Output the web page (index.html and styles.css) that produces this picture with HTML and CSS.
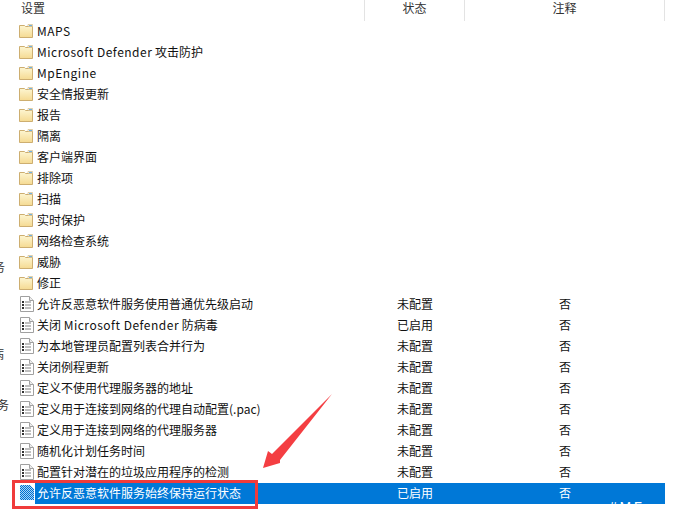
FILE: index.html
```html
<!DOCTYPE html>
<html lang="zh">
<head>
<meta charset="utf-8">
<title>设置</title>
<link rel="stylesheet" href="styles.css">
</head>
<body>
<svg class="defs" width="0" height="0">
  <defs>
    <linearGradient id="fg" x1="0" y1="0" x2="0" y2="1"><stop offset="0" stop-color="#fdf6d2"/><stop offset="1" stop-color="#f5da92"/></linearGradient>
    <pattern id="chk" width="2" height="2" patternUnits="userSpaceOnUse"><rect width="2" height="2" fill="#0070d0"/><rect width="1" height="1" fill="#a9d5f6"/><rect x="1" y="1" width="1" height="1" fill="#a9d5f6"/></pattern>
    <symbol id="folder" viewBox="0 0 16 16">
      <path d="M1.5 14.5V2.5h5l1 1h7v11z" fill="url(#fg)" stroke="#cdae70"/>
      <path d="M10 1.5h4.5v2H10z" fill="#fff" stroke="#cdae70" stroke-width=".6"/>
      <path d="M11 2h3v1h-3z" fill="#6db2e4"/>
    </symbol>
    <symbol id="doc" viewBox="0 0 16 16">
      <path d="M2.5 .5h9l4 4v11h-13z" fill="#fff" stroke="#a0a0a0"/>
      <path d="M11.5 .5v4h4" fill="#ececec" stroke="#a0a0a0"/>
      <path d="M4 5h2v2H4zM4 8h2v2H4zM4 11h2v2H4z" fill="#333"/>
      <path d="M7 6h6M7 9h6M7 12h6" stroke="#808080"/>
    </symbol>
    <symbol id="docsel" viewBox="0 0 16 16">
      <path d="M2 0h10l4 4v11H2z" fill="url(#chk)"/>
    </symbol>
  </defs>
</svg>
<main class="page">
  <div class="header">
    <div class="hcell h-set">设置</div>
    <div class="hcell h-state">状态</div>
    <div class="hcell h-note">注释</div>
  </div>
  <ul class="list">
    <li class="row"><svg class="ic"><use href="#folder"/></svg><span class="name"><span class="lat">MAPS</span></span></li>
    <li class="row"><svg class="ic"><use href="#folder"/></svg><span class="name"><span class="lat">Microsoft Defender</span> 攻击防护</span></li>
    <li class="row"><svg class="ic"><use href="#folder"/></svg><span class="name"><span class="lat">MpEngine</span></span></li>
    <li class="row"><svg class="ic"><use href="#folder"/></svg><span class="name">安全情报更新</span></li>
    <li class="row"><svg class="ic"><use href="#folder"/></svg><span class="name">报告</span></li>
    <li class="row"><svg class="ic"><use href="#folder"/></svg><span class="name">隔离</span></li>
    <li class="row"><svg class="ic"><use href="#folder"/></svg><span class="name">客户端界面</span></li>
    <li class="row"><svg class="ic"><use href="#folder"/></svg><span class="name">排除项</span></li>
    <li class="row"><svg class="ic"><use href="#folder"/></svg><span class="name">扫描</span></li>
    <li class="row"><svg class="ic"><use href="#folder"/></svg><span class="name">实时保护</span></li>
    <li class="row"><svg class="ic"><use href="#folder"/></svg><span class="name">网络检查系统</span></li>
    <li class="row"><svg class="ic"><use href="#folder"/></svg><span class="name">威胁</span></li>
    <li class="row"><svg class="ic"><use href="#folder"/></svg><span class="name">修正</span></li>
    <li class="row"><svg class="ic"><use href="#doc"/></svg><span class="name">允许反恶意软件服务使用普通优先级启动</span><span class="state">未配置</span><span class="note">否</span></li>
    <li class="row"><svg class="ic"><use href="#doc"/></svg><span class="name">关闭 <span class="lat">Microsoft Defender</span> 防病毒</span><span class="state">已启用</span><span class="note">否</span></li>
    <li class="row"><svg class="ic"><use href="#doc"/></svg><span class="name">为本地管理员配置列表合并行为</span><span class="state">未配置</span><span class="note">否</span></li>
    <li class="row"><svg class="ic"><use href="#doc"/></svg><span class="name">关闭例程更新</span><span class="state">未配置</span><span class="note">否</span></li>
    <li class="row"><svg class="ic"><use href="#doc"/></svg><span class="name">定义不使用代理服务器的地址</span><span class="state">未配置</span><span class="note">否</span></li>
    <li class="row"><svg class="ic"><use href="#doc"/></svg><span class="name">定义用于连接到网络的代理自动配置(.pac)</span><span class="state">未配置</span><span class="note">否</span></li>
    <li class="row"><svg class="ic"><use href="#doc"/></svg><span class="name">定义用于连接到网络的代理服务器</span><span class="state">未配置</span><span class="note">否</span></li>
    <li class="row"><svg class="ic"><use href="#doc"/></svg><span class="name">随机化计划任务时间</span><span class="state">未配置</span><span class="note">否</span></li>
    <li class="row"><svg class="ic"><use href="#doc"/></svg><span class="name">配置针对潜在的垃圾应用程序的检测</span><span class="state">未配置</span><span class="note">否</span></li>
    <li class="row selected"><svg class="ic"><use href="#docsel"/></svg><span class="name">允许反恶意软件服务始终保持运行状态</span><span class="state">已启用</span><span class="note">否</span></li>
  </ul>
  <div class="redbox"></div>
  <svg class="arrow" width="80" height="90" viewBox="256 390 80 90"><path d="M332 394L280 460L280 463L263 468L268 451L272 454z" fill="#f43e42"/></svg>
  <span class="edge e1">务</span><span class="edge e2">病</span><span class="edge e3">务</span>
  <span class="mark">#ME</span>
</main>
</body>
</html>
```
FILE: styles.css
```css
html, body { margin: 0; padding: 0; background: #fff; }
.defs { position: absolute; }
.page {
  position: relative;
  width: 676px;
  height: 526px;
  overflow: hidden;
  font-family: "Noto Sans CJK SC", "Noto Sans", sans-serif;
  font-size: 12px;
  color: #111;
}
.header { display: flex; height: 21px; }
.hcell { line-height: 16px; color: #333; border-right: 1px solid #e3e3e3; box-sizing: border-box; }
.h-set { width: 365px; padding-left: 21px; }
.h-state { width: 100px; text-align: center; }
.h-note { width: 200px; text-align: center; }
.list { list-style: none; margin: 0; padding: 0 0 0 18px; width: 647px; }
.row { display: flex; align-items: center; height: 21px; padding-bottom: 2px; box-sizing: border-box; white-space: nowrap; }
.ic { width: 16px; height: 16px; margin-top: 1px; flex: none; }
.name { width: 360px; padding-left: 3px; flex: none; }
.lat { letter-spacing: .5px; }
.state { width: 162px; flex: none; }
.note { flex: none; }
.selected { background: linear-gradient(to right, #fff 17px, #0078d7 17px); color: #fff; }
.redbox {
  position: absolute;
  left: 12px;
  top: 480px;
  width: 246px;
  height: 29px;
  box-sizing: border-box;
  border: 3px solid #f03b3b;
}
.arrow { position: absolute; left: 256px; top: 390px; }
.edge { position: absolute; color: #333; }
.e1 { left: -7px; top: 258px; }
.e2 { left: -8px; top: 345px; }
.e3 { left: -3px; top: 396px; }
.mark { position: absolute; left: 609px; top: 498px; color: #fff; font-size: 15px; letter-spacing: 2px; line-height: 18px; }
```
